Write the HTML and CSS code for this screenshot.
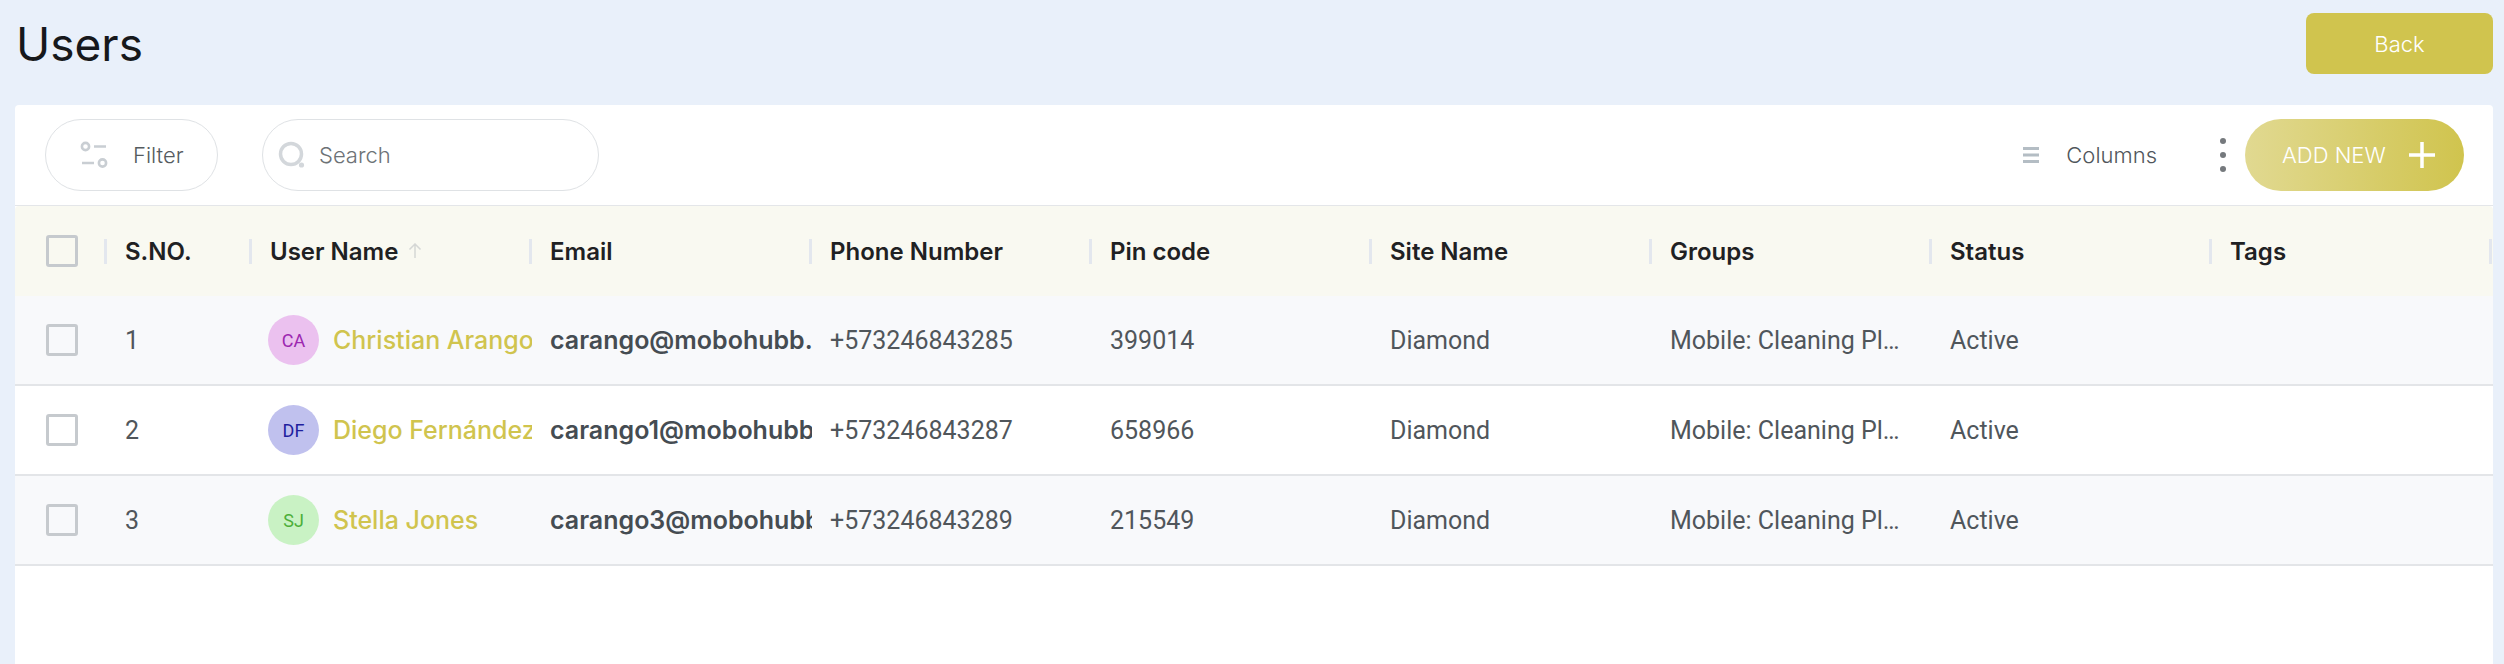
FILE: index.html
```html
<!DOCTYPE html>
<html lang="en">
<head>
<meta charset="utf-8">
<title>Users</title>
<link rel="stylesheet" href="styles.css">
</head>
<body>
<header class="page-head">
  <h1 class="title">Users</h1>
  <button class="back">Back</button>
</header>
<main class="card">
  <div class="toolbar">
    <button class="pill filter">
      <svg class="ico-filter" viewBox="0 0 28 28" width="28" height="28"><circle cx="5.5" cy="5.5" r="3.6"/><path d="M14 5.5h12M2 22h12"/><circle cx="22.5" cy="22" r="3.6"/></svg>
      <span>Filter</span>
    </button>
    <label class="pill search">
      <svg class="ico-search" viewBox="0 0 28 28" width="28" height="28"><circle cx="13" cy="13" r="10.5"/><circle class="dot" cx="23.5" cy="24" r="2.6"/></svg>
      <span class="placeholder">Search</span>
    </label>
    <div class="spacer"></div>
    <button class="columns">
      <svg class="ico-cols" viewBox="0 0 16 16" width="16" height="16"><path d="M0 1.5h16M0 8h16M0 14.500h16"/></svg>
      <span>Columns</span>
    </button>
    <div class="kebab"><i></i><i></i><i></i></div>
    <button class="add">
      <span>ADD NEW</span>
      <svg class="ico-plus" viewBox="0 0 26 26" width="26" height="26"><path d="M13 0v26M0 13h26"/></svg>
    </button>
  </div>
  <div class="row head">
    <div class="cell check sep"><span class="box"></span></div>
    <div class="cell sep">S.NO.</div>
    <div class="cell sep">User Name <svg class="ico-sort" viewBox="0 0 14 16" width="14" height="16"><path d="M7 15V1M1.500 6.500 7 1l5.500 5.500"/></svg></div>
    <div class="cell sep">Email</div>
    <div class="cell sep">Phone Number</div>
    <div class="cell sep">Pin code</div>
    <div class="cell sep">Site Name</div>
    <div class="cell sep">Groups</div>
    <div class="cell sep">Status</div>
    <div class="cell sep">Tags</div>
  </div>
  <div class="row body odd">
    <div class="cell check"><span class="box"></span></div>
    <div class="cell">1</div>
    <div class="cell user"><span class="avatar a1">CA</span><span class="name">Christian Arango</span></div>
    <div class="cell email">carango@mobohubb.com</div>
    <div class="cell">+573246843285</div>
    <div class="cell">399014</div>
    <div class="cell">Diamond</div>
    <div class="cell"><span class="ell">Mobile: Cleaning Plan</span></div>
    <div class="cell">Active</div>
    <div class="cell"></div>
  </div>
  <div class="row body">
    <div class="cell check"><span class="box"></span></div>
    <div class="cell">2</div>
    <div class="cell user"><span class="avatar a2">DF</span><span class="name">Diego Fernández</span></div>
    <div class="cell email">carango1@mobohubb.com</div>
    <div class="cell">+573246843287</div>
    <div class="cell">658966</div>
    <div class="cell">Diamond</div>
    <div class="cell"><span class="ell">Mobile: Cleaning Plan</span></div>
    <div class="cell">Active</div>
    <div class="cell"></div>
  </div>
  <div class="row body odd">
    <div class="cell check"><span class="box"></span></div>
    <div class="cell">3</div>
    <div class="cell user"><span class="avatar a3">SJ</span><span class="name">Stella Jones</span></div>
    <div class="cell email">carango3@mobohubb.com</div>
    <div class="cell">+573246843289</div>
    <div class="cell">215549</div>
    <div class="cell">Diamond</div>
    <div class="cell"><span class="ell">Mobile: Cleaning Plan</span></div>
    <div class="cell">Active</div>
    <div class="cell"></div>
  </div>
</main>
</body>
</html>
```

FILE: styles.css
```css
* { box-sizing: border-box; }
html, body { height: 100%; }
body {
  margin: 0;
  background: #e9f0fa;
  font-family: Inter, "Liberation Sans", sans-serif;
  overflow: hidden;
}
button { font-family: inherit; cursor: pointer; }

.page-head {
  height: 105px;
  padding: 13px 11px 0 16px;
  display: flex;
  justify-content: space-between;
  align-items: flex-start;
}
.title {
  margin: 0;
  font-size: 46px;
  font-weight: 400;
  line-height: 62px;
  color: #16181b;
}
.back {
  width: 187px;
  height: 61px;
  border: 0;
  border-radius: 8px;
  background: #d0c44e;
  color: #fff;
  font-size: 22px;
  font-weight: 300;
}

.card {
  margin: 0 11px 0 15px;
  height: 559px;
  background: #fff;
  border-radius: 4px 4px 0 0;
}
.toolbar {
  height: 101px;
  padding: 14px 29px 0 30px;
  display: flex;
  align-items: flex-start;
  border-bottom: 1px solid #e4e6e9;
}
.pill {
  height: 72px;
  border: 1px solid #dfe2e5;
  border-radius: 36px;
  background: #fff;
  display: flex;
  align-items: center;
  color: #555b60;
  font-size: 22px;
  font-weight: 300;
}
.filter { width: 173px; padding: 0 0 0 34px; gap: 25px; }
.search { width: 337px; margin-left: 44px; padding: 0 0 0 15px; gap: 13px; color: #6d7276; }
.ico-filter { fill: none; stroke: #c9ced3; stroke-width: 2.600; }
.ico-search { fill: none; stroke: #d3d7db; stroke-width: 3.500; }
.ico-search .dot { fill: #d3d7db; stroke: none; }
.spacer { flex: 1; }
.columns {
  height: 72px;
  border: 0;
  background: none;
  padding: 0;
  display: flex;
  align-items: center;
  gap: 27px;
  color: #50565b;
  font-size: 22px;
  font-weight: 300;
}
.ico-cols { stroke: #b4bdc4; stroke-width: 3; fill: none; }
.kebab {
  height: 72px;
  margin-left: 63px;
  width: 7px;
  display: flex;
  flex-direction: column;
  justify-content: center;
  gap: 8px;
}
.kebab i { width: 6px; height: 6px; border-radius: 50%; background: #75797d; }
.add {
  width: 219px;
  height: 72px;
  margin-left: 18px;
  border: 0;
  border-radius: 36px;
  background: linear-gradient(90deg, #e1d991 0%, #d0c44e 100%);
  color: #fff;
  font-size: 22px;
  font-weight: 300;
  display: flex;
  align-items: center;
  padding: 0 0 0 37px;
  gap: 23px;
}
.ico-plus { stroke: #fff; stroke-width: 3.500; fill: none; }

.row {
  display: grid;
  grid-template-columns: 92px 145px repeat(8, 280px);
  height: 90px;
  align-items: stretch;
}
.cell {
  display: flex;
  align-items: center;
  padding-left: 18px;
  overflow: hidden;
  white-space: nowrap;
  min-width: 0;
}
.check { padding-left: 31px; }
.box {
  width: 32px;
  height: 32px;
  border: 3px solid #c6cace;
  border-radius: 3px;
  background: transparent;
}
.head {
  background: #f9f9f1;
  font-size: 24px;
  font-weight: 600;
  color: #1f2123;
  border-radius: 4px 4px 0 0;
}
.head .cell { position: relative; gap: 0.4em; }
.sep::after {
  content: "";
  position: absolute;
  right: 0;
  top: 33px;
  width: 3px;
  height: 25px;
  background: #e3e7ee;
}
.ico-sort { fill: none; stroke: #d5d7d5; stroke-width: 1.500; }
.body {
  font-family: Roboto, "Liberation Sans", sans-serif;
  font-size: 25px;
  font-weight: 400;
  color: #50565b;
  border-bottom: 2px solid #e3e5e8;
  background: #fff;
}
.odd { background: #f8f9fb; }
.user { gap: 14px; padding-left: 16px; }
.avatar {
  flex: none;
  width: 51px;
  height: 50px;
  border-radius: 50%;
  display: flex;
  align-items: center;
  justify-content: center;
  font-size: 18px;
}
.a1 { background: #ebc1ef; color: #9c27b0; }
.a2 { background: #c0c1ee; color: #1f1f9e; }
.a3 { background: #c9f2c4; color: #4caf3a; }
.name {
  font-family: Inter, "Liberation Sans", sans-serif;
  font-size: 25px;
  font-weight: 500;
  color: #d0c44e;
}
.email {
  font-family: Inter, "Liberation Sans", sans-serif;
  font-size: 25px;
  font-weight: 600;
  color: #454c52;
}
.ell {
  display: block;
  width: 232px;
  overflow: hidden;
  text-overflow: ellipsis;
}
```
